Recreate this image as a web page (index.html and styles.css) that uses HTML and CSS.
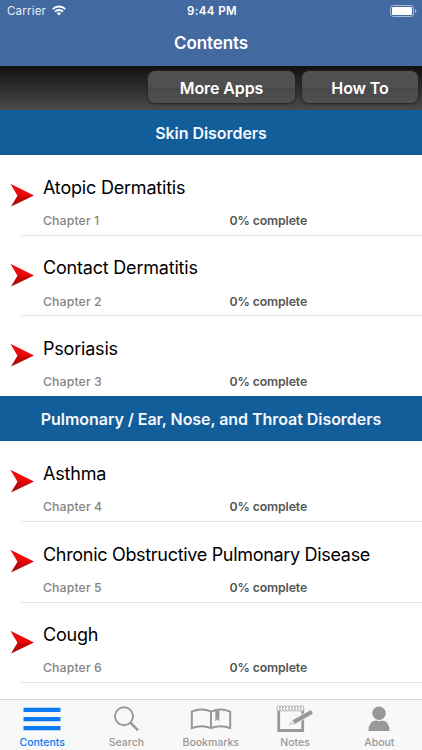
FILE: index.html
```html
<!DOCTYPE html>
<html lang="en">
<head>
<meta charset="utf-8">
<title>Contents</title>
<link rel="stylesheet" href="styles.css">
</head>
<body>
<svg class="defs" width="0" height="0" aria-hidden="true">
  <defs>
    <linearGradient id="red" x1="0" y1="0" x2="0" y2="1">
      <stop offset="0" stop-color="#e31212"/><stop offset=".45" stop-color="#f00808"/><stop offset=".6" stop-color="#cf0505"/><stop offset="1" stop-color="#980b0b"/>
    </linearGradient>
    <symbol id="arrow" viewBox="0 0 24 24"><path d="M.4 .8 23.5 12.2 1 22.9 7.3 12.5Z" fill="url(#red)"/></symbol>
  </defs>
</svg>
<div class="screen">
  <header class="header">
    <div class="status">
      <div class="carrier"><span>Carrier</span>
        <svg width="14" height="11" viewBox="0 0 14 11"><g fill="none" stroke="#fff" stroke-width="1.9"><path d="M.7 4.1a9 9 0 0 1 12.6 0"/><path d="M3 6.6a5.7 5.7 0 0 1 8 0"/></g><path d="M4.7 8.3a3.3 3.3 0 0 1 4.6 0L7 10.6Z" fill="#fff"/></svg>
      </div>
      <div class="clock">9:44 PM</div>
      <div class="battery"><svg width="27" height="12" viewBox="0 0 27 12"><rect x=".5" y=".5" width="23" height="11" rx="2.8" fill="none" stroke="#a9bbd8"/><rect x="2" y="2" width="20" height="8" rx="1.3" fill="#fff"/><path d="M25 4v4q1.5-.6 1.5-2T25 4Z" fill="#a9bbd8"/></svg></div>
    </div>
    <h1 class="title">Contents</h1>
  </header>
  <div class="toolbar">
    <button class="btn more">More Apps</button>
    <button class="btn how">How To</button>
  </div>
  <main class="list">
    <h2 class="section">Skin Disorders</h2>
    <div class="row"><svg class="arrow"><use href="#arrow"/></svg><div class="cell"><div class="name">Atopic Dermatitis</div><div class="meta"><span class="chapter">Chapter 1</span><span>0% complete</span></div></div></div>
    <div class="row"><svg class="arrow"><use href="#arrow"/></svg><div class="cell"><div class="name">Contact Dermatitis</div><div class="meta"><span class="chapter">Chapter 2</span><span>0% complete</span></div></div></div>
    <div class="row last"><svg class="arrow"><use href="#arrow"/></svg><div class="cell"><div class="name">Psoriasis</div><div class="meta"><span class="chapter">Chapter 3</span><span>0% complete</span></div></div></div>
    <h2 class="section">Pulmonary / Ear, Nose, and Throat Disorders</h2>
    <div class="row"><svg class="arrow"><use href="#arrow"/></svg><div class="cell"><div class="name">Asthma</div><div class="meta"><span class="chapter">Chapter 4</span><span>0% complete</span></div></div></div>
    <div class="row"><svg class="arrow"><use href="#arrow"/></svg><div class="cell"><div class="name long">Chronic Obstructive Pulmonary Disease</div><div class="meta"><span class="chapter">Chapter 5</span><span>0% complete</span></div></div></div>
    <div class="row"><svg class="arrow"><use href="#arrow"/></svg><div class="cell"><div class="name">Cough</div><div class="meta"><span class="chapter">Chapter 6</span><span>0% complete</span></div></div></div>
  </main>
  <nav class="tabs">
    <div class="tab active"><svg width="40" height="34" viewBox="0 0 40 34"><path d="M1.5 7.7h37v4.3h-37zM1.5 17h37v4.3h-37zM1.5 26h37v4.3h-37z" fill="currentColor"/></svg><span>Contents</span></div>
    <div class="tab"><svg width="40" height="34" viewBox="0 0 40 34"><g fill="none" stroke="currentColor" stroke-width="1.9"><circle cx="18" cy="16.2" r="9"/><path d="m24.4 22.6 7.6 7.8" stroke-width="2.4"/></g></svg><span>Search</span></div>
    <div class="tab"><svg width="44" height="34" viewBox="0 0 44 34"><path d="M2.8 11.7Q12.7 7.2 22 11.7Q31.3 7.2 41.2 11.7V28Q31.3 24.5 22 28Q12.7 24.5 2.8 28ZM22 11.7V28" fill="none" stroke="currentColor" stroke-width="2"/><path d="M26.3 10.4h4.1v11.1l-2-2.3-2.1 2.3Z" fill="currentColor"/></svg><span>Bookmarks</span></div>
    <div class="tab"><svg width="40" height="34" viewBox="0 0 40 34"><path d="M3.7 9v21.5h24V9" fill="none" stroke="currentColor" stroke-width="2.8"/><g transform="translate(-1 -.7)" fill="#f8f8f8" stroke="currentColor" stroke-width=".7"><ellipse cx="4.5" cy="9.2" rx="1.6" ry="2.8"/><ellipse cx="7.5" cy="9.2" rx="1.6" ry="2.8"/><ellipse cx="10.5" cy="9.2" rx="1.6" ry="2.8"/><ellipse cx="13.5" cy="9.2" rx="1.6" ry="2.8"/><ellipse cx="16.5" cy="9.2" rx="1.6" ry="2.8"/><ellipse cx="19.5" cy="9.2" rx="1.6" ry="2.8"/><ellipse cx="22.5" cy="9.2" rx="1.6" ry="2.8"/><ellipse cx="25.5" cy="9.2" rx="1.6" ry="2.8"/><ellipse cx="28.3" cy="9.2" rx="1.6" ry="2.8"/></g><path d="m13.5 25.2 4.2-5.4L36 9.5l2.4 4.2-18.2 10.5Z" fill="currentColor" stroke="#f8f8f8" stroke-width=".8"/><path d="m15.5 23.8 2.4-3 1.8 2.8Z" fill="#f8f8f8"/></svg><span>Notes</span></div>
    <div class="tab"><svg width="40" height="34" viewBox="0 0 40 34"><circle cx="20" cy="13.2" r="6.7" fill="currentColor"/><path d="M9.4 31Q9.8 20.6 17 20.4Q20 21.4 23 20.4Q30.2 20.6 30.6 31Z" fill="currentColor"/></svg><span>About</span></div>
  </nav>
</div>
</body>
</html>
```
FILE: styles.css
```css
* { box-sizing: border-box; }
body { margin: 0; font-family: Inter, "Liberation Sans", sans-serif; background: #fff; }
.defs { position: absolute; }
.screen { width: 422px; height: 750px; display: flex; flex-direction: column; overflow: hidden; white-space: nowrap; }
.header { height: 66px; flex: none; background: #4369a1; color: #fff; }
.status { height: 22px; display: grid; grid-template-columns: 1fr auto 1fr; align-items: center; padding: 0 5px 0 7px; font-size: 11.5px; }
.carrier { display: flex; align-items: center; gap: 6px; color: #e9eef6; letter-spacing: .2px; }
.carrier svg { margin-top: -2px; }
.battery { display: flex; justify-content: flex-end; margin-top: -1px; }
.clock { font-weight: 600; font-size: 11.5px; letter-spacing: .4px; }
.title { margin: 0; font-size: 17px; font-weight: 600; line-height: 43px; text-align: center; letter-spacing: -.1px; }
.toolbar { height: 44px; flex: none; display: flex; justify-content: flex-end; align-items: flex-start; gap: 7px; padding: 5px 4px 0 0; background: linear-gradient(#111, #4a4a4a); }
.btn { height: 32px; padding: 0; border: 0; border-radius: 7px; color: #fff; font: 600 16px/34px Inter, sans-serif; letter-spacing: -.1px; background: linear-gradient(#505050 0 50%, #494949 54%, #505050); box-shadow: 0 0 2px 1px #252525; }
.more { width: 147px; }
.how { width: 116px; }
.list { flex: none; height: 589px; }
.section { height: 45px; margin: 0; background: #125e9a; color: #f4f8fc; text-align: center; font-size: 16px; line-height: 46px; font-weight: 600; letter-spacing: -.05px; }
.row { height: 80.4px; display: flex; padding-left: 9.5px; }
.arrow { width: 24.5px; height: 24.5px; margin-top: 27.7px; flex: none; }
.cell { flex: 1; margin: 0 0 -.6px -13px; padding: 20px 0 0 22px; border-bottom: 1px solid #e3e3e3; }
.last .cell { border-bottom: 0; }
.name { font-size: 18px; line-height: 25px; letter-spacing: -.2px; color: #000; }
.long { letter-spacing: -.31px; }
.meta { display: grid; grid-template-columns: 186.5px auto; margin-top: 13.3px; font-size: 12.3px; line-height: 16px; font-weight: 600; letter-spacing: -.12px; color: #555; }
.chapter { color: #858585; font-weight: 500; letter-spacing: .1px; }
.tabs { height: 51px; flex: none; display: grid; grid-template-columns: repeat(5, 84.3px); background: #f8f8f8; border-top: 1px solid #d8d8d8; color: #989898; }
.tab { display: flex; flex-direction: column; align-items: center; font-size: 10.5px; font-weight: 500; line-height: 18px; }
.tab svg { flex: none; }
.active { color: #0a7af5; letter-spacing: -.02px; }
```
